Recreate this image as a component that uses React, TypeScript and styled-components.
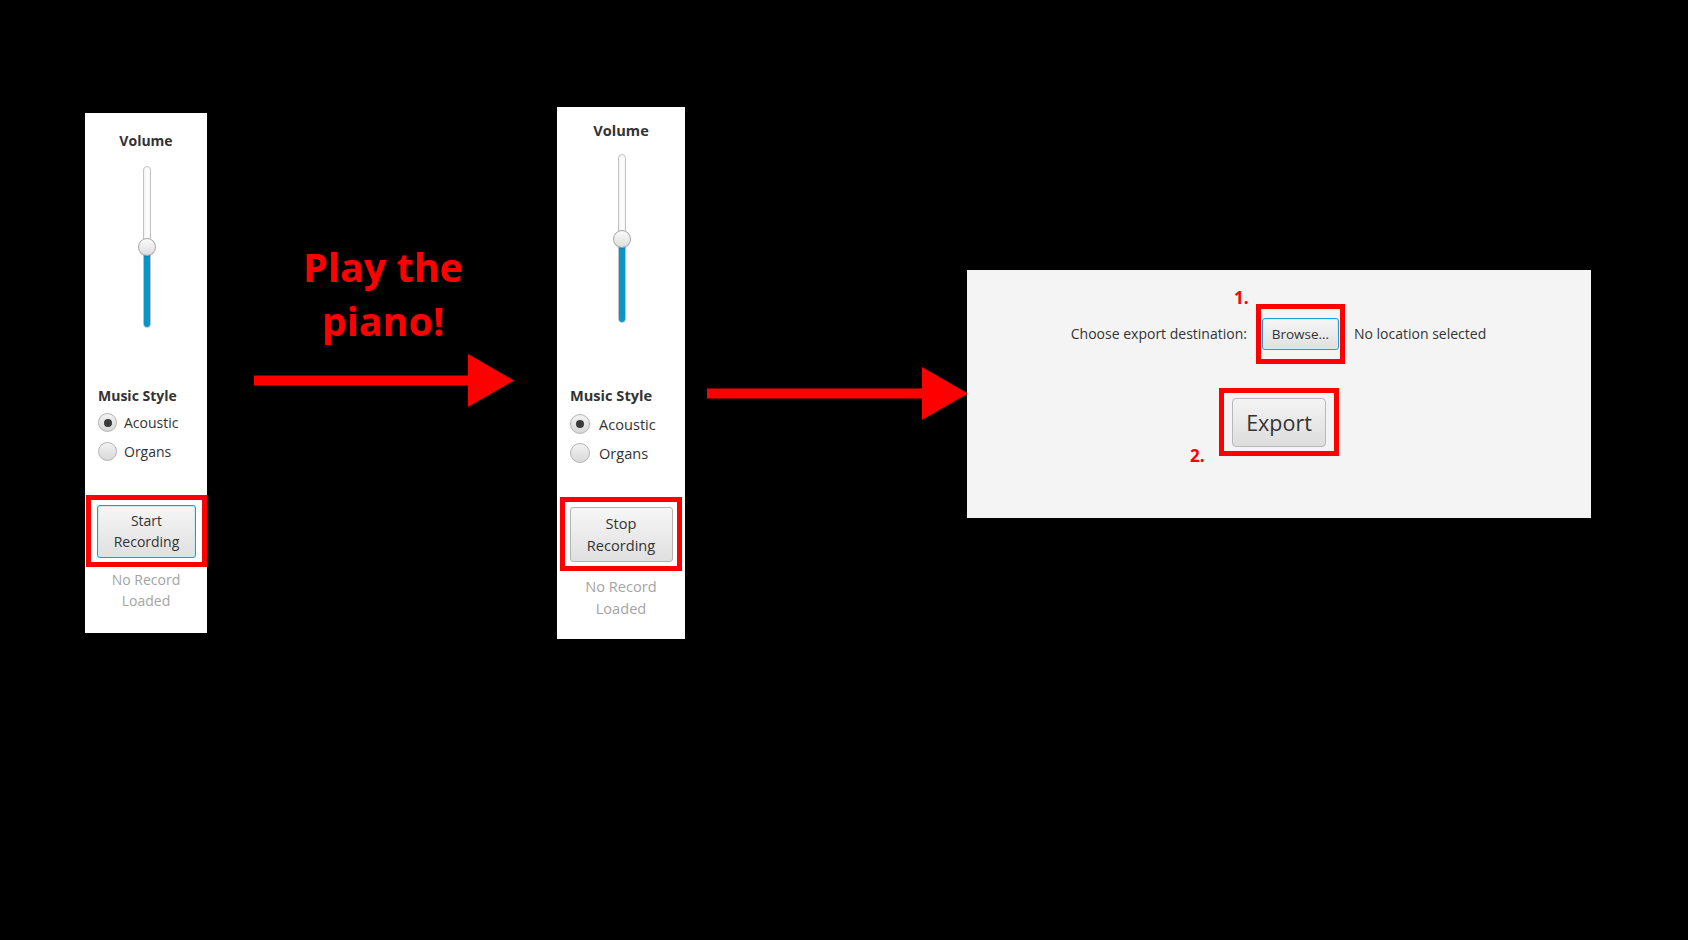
import styled, { createGlobalStyle } from 'styled-components';

const GlobalStyle = createGlobalStyle`
  html, body {
    margin: 0;
    padding: 0;
    background: #000;
  }
  body {
    font-family: 'Open Sans', 'Noto Sans', sans-serif;
  }
`;

interface PanelLayout {
  width: number;
  height: number;
  titleTop: number;
  trackGap: number;
  trackHeight: number;
  styleGap: number;
  radioGap: number;
  radioSize: number;
  labelGap: number;
  boxGap: number;
  boxInset: number;
  boxWidth: number;
  boxHeight: number;
  btnWidth: number;
  btnHeight: number;
  noteGap: number;
  noteLine: number;
  font: number;
}

const startLayout: PanelLayout = {
  width: 122,
  height: 520,
  titleTop: 18,
  trackGap: 15,
  trackHeight: 162,
  styleGap: 58,
  radioGap: 2,
  radioSize: 19,
  labelGap: 7,
  boxGap: 29,
  boxInset: 1,
  boxWidth: 121,
  boxHeight: 72,
  btnWidth: 99,
  btnHeight: 53,
  noteGap: 2,
  noteLine: 21,
  font: 14,
};

const stopLayout: PanelLayout = {
  width: 128,
  height: 532,
  titleTop: 13,
  trackGap: 14,
  trackHeight: 169,
  styleGap: 62,
  radioGap: 4,
  radioSize: 20,
  labelGap: 9,
  boxGap: 30,
  boxInset: 3,
  boxWidth: 122,
  boxHeight: 74,
  btnWidth: 103,
  btnHeight: 55,
  noteGap: 4,
  noteLine: 22,
  font: 14.6,
};

const ControlPanel = ({ layout, action, focused }: { layout: PanelLayout; action: string; focused?: boolean }) => {
  return (
    <Panel l={layout}>
      <Title l={layout}>Volume</Title>
      <Slider l={layout} value={0.5} />
      <SectionLabel l={layout}>Music Style</SectionLabel>
      <RadioList l={layout}>
        <RadioRow l={layout}>
          <RadioDot size={layout.radioSize} checked />
          Acoustic
        </RadioRow>
        <RadioRow l={layout}>
          <RadioDot size={layout.radioSize} />
          Organs
        </RadioRow>
      </RadioList>
      <HighlightBox l={layout}>
        <PanelButton l={layout} focused={focused}>
          {action}
          <br />
          Recording
        </PanelButton>
      </HighlightBox>
      <Note l={layout}>
        No Record
        <br />
        Loaded
      </Note>
    </Panel>
  );
};

const Slider = ({ l, value }: { l: PanelLayout; value: number }) => (
  <SliderTrack l={l}>
    <SliderFill style={{ height: `${value * 100}%` }} />
    <SliderThumb style={{ bottom: `calc(${value * 100}% - 9px)` }} />
  </SliderTrack>
);

const Arrow = ({ width }: { width: number }) => (
  <svg width={width} height={53} viewBox={`0 0 ${width} 53`}>
    <rect x={0} y={21.5} width={width - 44} height={10} fill="#ff0000" />
    <polygon points={`${width - 46},0 ${width},26.5 ${width - 46},53`} fill="#ff0000" />
  </svg>
);

const MarkedBox = ({
  padY,
  padX,
  step,
  below,
  children,
}: {
  padY: number;
  padX: number;
  step: string;
  below?: boolean;
  children: React.ReactNode;
}) => (
  <RedFrame padY={padY} padX={padX}>
    {children}
    <StepLabel below={below}>{step}</StepLabel>
  </RedFrame>
);

const App = () => {
  return (
    <>
      <GlobalStyle />
      <Canvas>
        <Slot top={113}>
          <ControlPanel layout={startLayout} action="Start" focused />
        </Slot>
        <Caption>
          <CaptionText>
            Play the
            <br />
            piano!
          </CaptionText>
          <Arrow width={260} />
        </Caption>
        <Slot top={107} gap={43}>
          <ControlPanel layout={stopLayout} action="Stop" />
        </Slot>
        <Slot top={367} gap={22}>
          <Arrow width={261} />
        </Slot>
        <Slot top={270} gap={-1}>
          <ExportPanel>
            <ExportRow>
              <ExportText>Choose export destination:</ExportText>
              <MarkedBox padY={9} padX={1} step="1.">
                <BrowseButton>Browse...</BrowseButton>
              </MarkedBox>
              <ExportText>No location selected</ExportText>
            </ExportRow>
            <MarkedBox padY={4.5} padX={8} step="2." below>
              <ExportButton>Export</ExportButton>
            </MarkedBox>
          </ExportPanel>
        </Slot>
      </Canvas>
    </>
  );
};

const Canvas = styled.div`
  width: 1688px;
  height: 940px;
  background: #000;
  display: flex;
  align-items: flex-start;
  padding-left: 85px;
  box-sizing: border-box;
  overflow: hidden;
`;

const Slot = styled.div<{ top: number; gap?: number }>`
  margin-top: ${({ top }) => top}px;
  margin-left: ${({ gap }) => gap || 0}px;
  flex-shrink: 0;
`;

const Panel = styled.div<{ l: PanelLayout }>`
  width: ${({ l }) => l.width}px;
  height: ${({ l }) => l.height}px;
  background: #ffffff;
  display: flex;
  flex-direction: column;
  padding-top: ${({ l }) => l.titleTop}px;
  box-sizing: border-box;
  color: #333;
  font-size: ${({ l }) => l.font}px;
`;

const Title = styled.div<{ l: PanelLayout }>`
  font-weight: 700;
  text-align: center;
  line-height: 20px;
  font-size: ${({ l }) => l.font}px;
`;

const SliderTrack = styled.div<{ l: PanelLayout }>`
  position: relative;
  align-self: center;
  margin-top: ${({ l }) => l.trackGap}px;
  margin-left: 2px;
  width: 8px;
  height: ${({ l }) => l.trackHeight}px;
  border-radius: 4px;
  box-sizing: border-box;
  border: 1px solid #c2c2c2;
  background: linear-gradient(to right, #f2f2f2, #ffffff 60%, #f6f6f6);
`;

const SliderFill = styled.div`
  position: absolute;
  left: 0px;
  right: 0px;
  bottom: 0;
  border-radius: 3px;
  background: #0896c8;
`;

const SliderThumb = styled.div`
  position: absolute;
  left: 50%;
  width: 18px;
  height: 18px;
  margin-left: -9px;
  border-radius: 50%;
  box-sizing: border-box;
  border: 1px solid #a6a6a6;
  background: linear-gradient(#fafafa, #dedede);
  box-shadow: 0 1px 1px rgba(0, 0, 0, 0.12);
`;

const SectionLabel = styled.div<{ l: PanelLayout }>`
  margin-top: ${({ l }) => l.styleGap}px;
  padding-left: 13px;
  font-weight: 700;
  line-height: 20px;
`;

const RadioList = styled.div<{ l: PanelLayout }>`
  margin-top: ${({ l }) => l.radioGap}px;
  padding-left: 13px;
  display: flex;
  flex-direction: column;
`;

const RadioRow = styled.div<{ l: PanelLayout }>`
  display: flex;
  align-items: center;
  gap: ${({ l }) => l.labelGap}px;
  height: 29px;
`;

const RadioDot = styled.span<{ size: number; checked?: boolean }>`
  position: relative;
  width: ${({ size }) => size}px;
  height: ${({ size }) => size}px;
  border-radius: 50%;
  box-sizing: border-box;
  border: 1px solid #b3b3b3;
  background: linear-gradient(#f2f2f2, #d8d8d8);
  &::after {
    content: '';
    display: ${({ checked }) => (checked ? 'block' : 'none')};
    position: absolute;
    left: 50%;
    top: 50%;
    width: 8px;
    height: 8px;
    margin: -4px 0 0 -4px;
    border-radius: 50%;
    background: #3a3a3a;
  }
`;

const HighlightBox = styled.div<{ l: PanelLayout }>`
  margin-top: ${({ l }) => l.boxGap}px;
  margin-left: ${({ l }) => l.boxInset}px;
  width: ${({ l }) => l.boxWidth}px;
  height: ${({ l }) => l.boxHeight}px;
  border: 5px solid #ff0000;
  box-sizing: border-box;
  display: flex;
  align-items: center;
  justify-content: center;
`;

const PanelButton = styled.div<{ l: PanelLayout; focused?: boolean }>`
  width: ${({ l }) => l.btnWidth}px;
  height: ${({ l }) => l.btnHeight}px;
  box-sizing: border-box;
  border-radius: 3px;
  border: 1px solid ${({ focused }) => (focused ? '#129fd6' : '#b4b4b4')};
  box-shadow: ${({ focused }) => (focused ? 'inset 0 0 0 1px #cfe9f5' : 'none')};
  background: linear-gradient(#f6f6f6, #e0e0e0);
  display: flex;
  align-items: center;
  justify-content: center;
  text-align: center;
  line-height: ${({ l }) => l.noteLine}px;
  color: #333;
`;

const Note = styled.div<{ l: PanelLayout }>`
  margin-top: ${({ l }) => l.noteGap}px;
  text-align: center;
  line-height: ${({ l }) => l.noteLine}px;
  color: #a4a4a4;
`;

const Caption = styled.div`
  margin-left: 47px;
  margin-top: 240px;
  width: 260px;
  display: flex;
  flex-direction: column;
  align-items: center;
  flex-shrink: 0;
  gap: 6px;
`;

const CaptionText = styled.div`
  color: #ff0000;
  font-family: 'Open Sans', sans-serif;
  font-weight: 700;
  font-size: 39.5px;
  line-height: 54px;
  text-align: center;
  margin-left: -2px;
`;

const ExportPanel = styled.div`
  width: 624px;
  height: 248px;
  background: #f4f4f4;
  display: flex;
  flex-direction: column;
  align-items: center;
  padding-top: 34px;
  box-sizing: border-box;
  gap: 24px;
  color: #333;
`;

const ExportRow = styled.div`
  display: flex;
  align-items: center;
  gap: 9px;
  margin-left: -1px;
`;

const ExportText = styled.span`
  font-size: 14px;
  line-height: 20px;
  color: #333;
`;

const RedFrame = styled.div<{ padY: number; padX: number }>`
  position: relative;
  border: 5px solid #ff0000;
  padding: ${({ padY }) => padY}px ${({ padX }) => padX}px;
  display: flex;
`;

const StepLabel = styled.span<{ below?: boolean }>`
  position: absolute;
  color: #ff0000;
  font-weight: 700;
  font-size: 17px;
  line-height: 20px;
  ${({ below }) => (below ? 'left: -34px; bottom: -15px;' : 'left: -27px; top: -21px;')}
`;

const BrowseButton = styled.div`
  width: 77px;
  height: 32px;
  box-sizing: border-box;
  border-radius: 3px;
  border: 1px solid #18a0d8;
  box-shadow: inset 0 0 0 1px #d4ecf6;
  background: linear-gradient(#f6f6f6, #e0e0e0);
  display: flex;
  align-items: center;
  justify-content: center;
  font-size: 13.5px;
  color: #333;
`;

const ExportButton = styled.div`
  width: 94px;
  height: 49px;
  box-sizing: border-box;
  border-radius: 4px;
  border: 1px solid #b8b8b8;
  background: linear-gradient(#f4f4f4, #dddddd);
  display: flex;
  align-items: center;
  justify-content: center;
  font-size: 21.5px;
  color: #333;
`;

export default App;
